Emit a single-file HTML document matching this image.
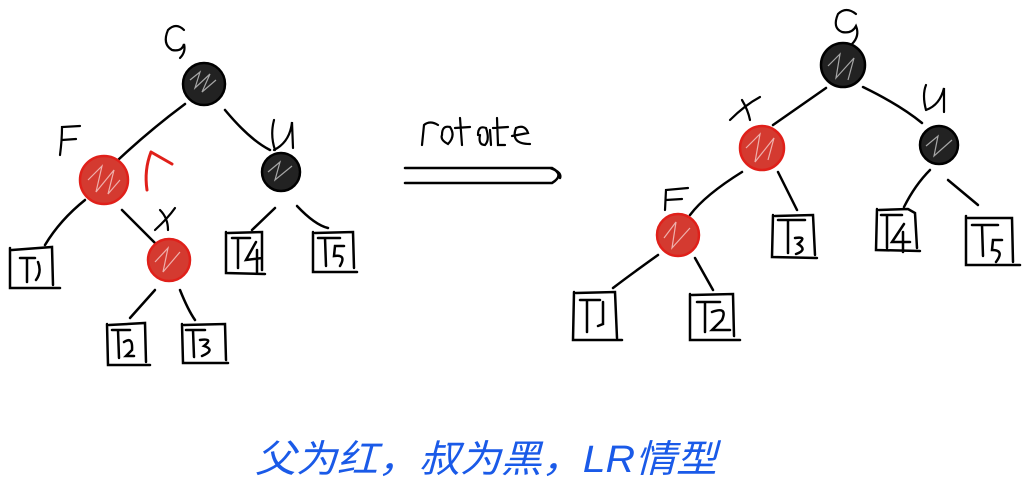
<!DOCTYPE html>
<html><head><meta charset="utf-8"><style>
html,body{margin:0;padding:0;background:#fff;width:1032px;height:488px;overflow:hidden}
svg{display:block}
</style></head><body>
<svg width="1032" height="488" viewBox="0 0 1032 488" xmlns="http://www.w3.org/2000/svg">
<g fill="none" stroke="#000" stroke-width="2.5" stroke-linecap="round">
<path d="M185 104 Q150 130 118 160"/><path d="M225 110 Q250 140 270 150"/>
<path d="M85 200 Q60 220 45 245"/><path d="M122 210 L157 245"/>
<path d="M155 290 L130 318"/><path d="M180 290 Q188 310 195 320"/>
<path d="M275 208 L252 230"/><path d="M297 206 Q315 225 328 228"/>
<path d="M826 88 L773 125"/><path d="M863 87 Q900 105 922 123"/>
<path d="M742 172 Q705 195 690 215"/><path d="M778 172 L797 210"/>
<path d="M930 170 Q915 185 904 207"/><path d="M948 180 L978 205"/>
<path d="M658 255 Q630 275 613 288"/><path d="M695 258 L713 290"/>
<path d="M10 248 L10 288 L60 288 M12 250 L52 247 L53 285 M20 258 L35 258 M27 258 L27 282 M38 262 Q42 272 36 280"/>
<path d="M107 324 L108 365 L150 365 M109 325 L145 323 L146 362 M112 330 L130 330 M118 330 L119 358 M124 342 Q133 336 132 350 L126 356 L134 356"/>
<path d="M182 324 L183 363 L228 363 M184 325 L225 324 L226 360 M186 330 L205 330 M193 330 L194 357 M200 340 Q214 338 204 346 Q216 350 202 356"/>
<path d="M226 232 L226 273 L265 274 M228 233 L262 232 L262 270 M232 238 L250 238 M238 238 L238 268 M256 242 L246 260 L262 258 M257 250 L257 272"/>
<path d="M313 232 L313 272 L357 272 M315 233 L353 232 L354 268 M318 238 L340 238 M325 238 L326 266 M344 246 L335 246 L334 256 Q347 254 340 266"/>
<path d="M773 215 L772 257 L817 258 M775 216 L813 215 L815 255 M778 220 L805 220 M788 220 L788 253 M795 238 Q808 236 798 244 Q808 250 796 254"/>
<path d="M877 209 L876 250 L920 251 M879 210 L908 209 L915 213 L917 248 M881 215 L902 215 M887 215 L887 248 M904 224 L892 242 L910 242 M903 232 L903 252"/>
<path d="M966 216 L966 265 L1020 265 M968 218 L1012 218 L1013 262 M972 225 L998 225 M982 225 L983 256 M1002 240 L993 240 L992 250 Q1005 250 996 262"/>
<path d="M574 292 L573 340 L622 340 M576 293 L615 292 L617 338 M580 300 L600 300 M587 300 L587 332 M603 302 L603 324 L598 326"/>
<path d="M690 294 L690 340 L740 340 M692 295 L733 294 L734 336 M697 302 L720 302 M705 302 L705 332 M712 312 Q728 306 722 320 L712 330 L730 330"/>
<path d="M405 168 L552 168 Q565 175 552 183 L405 183 M550 168 Q562 172 560 178"/>
</g>
<g stroke-width="2.5">
<circle cx="204" cy="84" r="21" fill="#222" stroke="#000"/>
<circle cx="281" cy="172" r="19" fill="#222" stroke="#000"/>
<circle cx="104" cy="180" r="24" fill="#d43a30" stroke="#e0201a"/>
<circle cx="169" cy="260" r="21" fill="#d43a30" stroke="#e0201a"/>
<circle cx="843" cy="65" r="22" fill="#222" stroke="#000"/>
<circle cx="939" cy="145" r="19" fill="#222" stroke="#000"/>
<circle cx="762" cy="148" r="22" fill="#d43a30" stroke="#e0201a"/>
<circle cx="678" cy="235" r="21" fill="#d43a30" stroke="#e0201a"/>
</g>
<g stroke="#fff" stroke-width="1.2" fill="none" opacity="0.6">
<path d="M190 80 L200 72 L195 88 L210 74 L202 92 L216 80"/>
<path d="M268 172 L280 162 L275 180 L292 166"/>
<path d="M88 180 L102 166 L96 192 L114 170 L108 194 L120 180"/>
<path d="M155 262 L168 248 L163 272 L180 252"/>
<path d="M828 66 L840 54 L836 78 L854 58 L848 80"/>
<path d="M926 146 L938 136 L934 156 L952 140"/>
<path d="M746 148 L760 134 L755 162 L774 138 L768 160"/>
<path d="M664 238 L676 222 L672 248 L690 228"/>
</g>
<path d="M147 190 Q144 170 151 152 M151 152 L172 164" fill="none" stroke="#e0201a" stroke-width="3" stroke-linecap="round"/>
<g fill="none" stroke="#000" stroke-width="2.2" stroke-linecap="round">
<path d="M184 30 Q176 22 168 30 Q162 44 172 50 Q182 52 184 44 Q186 52 180 58"/>
<path d="M60 155 Q62 140 62 127 L80 126 M62 140 L76 139"/>
<path d="M275 150 Q270 135 274 120 M274 150 Q290 142 292 122 L293 148"/>
<path d="M155 230 Q168 218 175 208 M160 210 Q168 218 168 230"/>
<path d="M856 14 Q846 6 838 14 Q832 28 842 32 Q852 34 856 26 Q860 36 852 44"/>
<path d="M730 120 Q745 105 760 97 M742 100 Q748 110 750 120"/>
<path d="M926 110 Q922 95 926 85 M926 110 Q940 105 944 88 L944 112"/>
<path d="M665 210 L666 190 L688 188 M666 200 L682 199"/>
<path d="M422 145 L424 125 Q430 120 438 125 M442 135 Q442 125 450 127 Q456 136 448 144 Q440 140 442 135 M460 118 L462 145 M455 128 L470 127 M478 135 Q478 125 486 128 Q490 140 485 145 Q478 145 480 135 M490 130 L491 145 M497 118 L498 145 L505 145 M493 128 L508 127 M512 136 L528 133 Q525 124 516 128 Q510 144 530 144"/>
</g>
<text x="255" y="472" font-family="'Liberation Sans','Noto Sans CJK SC',sans-serif" font-size="38" fill="#1a5ae8" textLength="462" lengthAdjust="spacingAndGlyphs" font-style="italic">父为红，叔为黑，LR情型</text>
</svg>
</body></html>
